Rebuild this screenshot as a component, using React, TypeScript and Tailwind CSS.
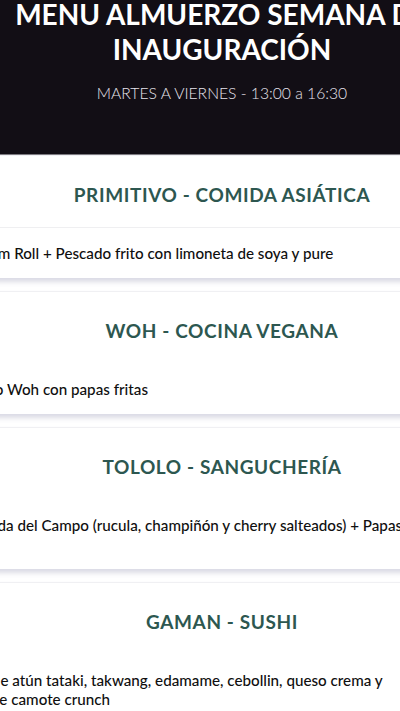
import React from 'react';

type Section = {
  title: string;
  dish: string;
  divider?: boolean;
};

const sections: Section[] = [
  {
    title: 'PRIMITIVO - COMIDA ASIÁTICA',
    dish: 'Dimsum Roll + Pescado frito con limoneta de soya y pure',
    divider: true,
  },
  {
    title: 'WOH - COCINA VEGANA',
    dish: 'Combo Woh con papas fritas',
  },
  {
    title: 'TOLOLO - SANGUCHERÍA',
    dish: 'Ensalada del Campo (rucula, champiñón y cherry salteados) + Papas fritas',
  },
  {
    title: 'GAMAN - SUSHI',
    dish: 'Maki de atún tataki, takwang, edamame, cebollin, queso crema y salsa de camote crunch',
  },
];

const MenuCard: React.FC<{ section: Section; first?: boolean }> = ({ section, first }) => (
  <section
    className={
      'bg-white border-t border-[#f0f0f3] shadow-[0_4px_5px_rgba(70,70,120,0.2)] ' +
      (first ? '' : 'mt-[13px]')
    }
  >
    <div
      className={
        'pt-[27px] pb-[20px] border-b ' +
        (section.divider ? 'border-[#efeff1]' : 'border-transparent')
      }
    >
      <h2 className="text-center text-[19px] leading-[24px] font-bold tracking-[0.6px] text-[#2d5750]">
        {section.title}
      </h2>
    </div>
    <p className="pl-[35px] pr-[114px] pt-[16px] pb-[15px] text-[15.2px] leading-[19px] font-medium text-[#0f0f0f]">
      {section.dish}
    </p>
  </section>
);

export default function App() {
  return (
    <div className="w-full h-[711px] overflow-hidden bg-white font-['Lato','Noto_Sans',sans-serif]">
      <div className="w-[604px] -ml-[80px]">
        <header className="bg-[#120e15] pb-[49px] border-b border-[#7d7b80]">
          <h1 className="-mt-[3px] text-center text-[28px] leading-[35px] font-bold text-white">
            MENU ALMUERZO SEMANA DE
            <br />
            INAUGURACIÓN
          </h1>
          <p className="mt-[14px] text-center text-[15.7px] leading-[24px] font-light text-[#e6e3ec]">
            MARTES A VIERNES - 13:00 a 16:30
          </p>
        </header>
        <main>
          {sections.map((s, i) => (
            <MenuCard key={s.title} section={s} first={i === 0} />
          ))}
        </main>
      </div>
    </div>
  );
}
